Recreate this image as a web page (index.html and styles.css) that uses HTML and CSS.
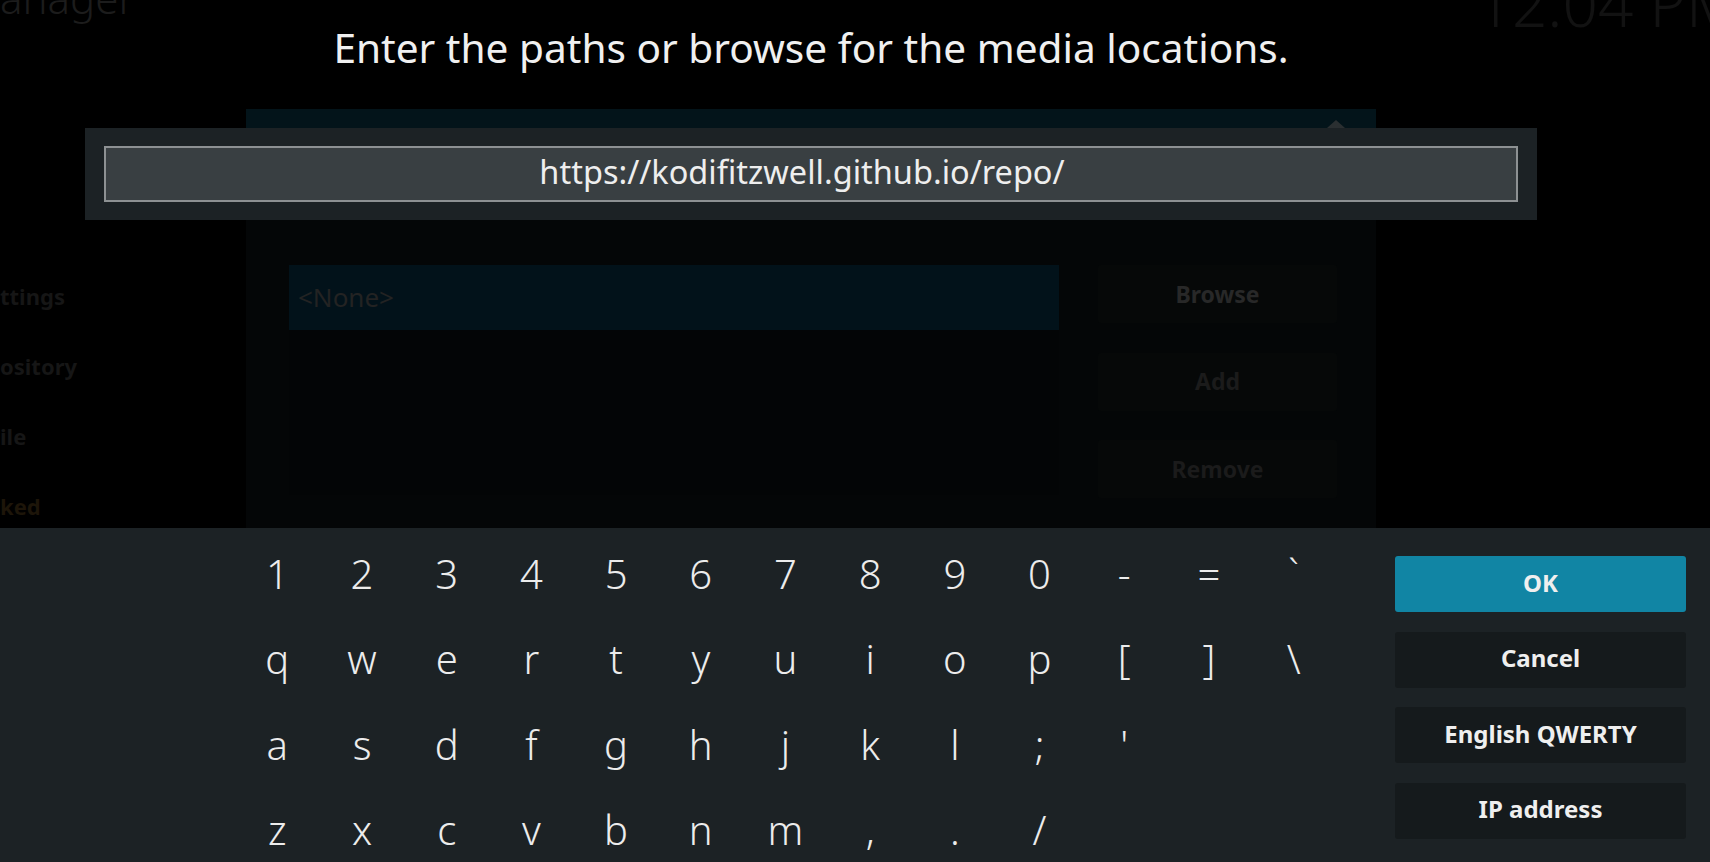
FILE: index.html
```html
<!DOCTYPE html>
<html lang="en">
<head>
<meta charset="utf-8">
<title>Keyboard</title>
<link rel="stylesheet" href="styles.css">
</head>
<body>
<div class="screen">
  <div class="bg">
    <div class="bg-top">
      <div class="bg-heading">anager</div>
      <div class="bg-clock">12:04 PM</div>
    </div>
    <div class="bg-main">
      <nav class="bg-menu">
        <div class="bg-menu-item">ttings</div>
        <div class="bg-menu-item">ository</div>
        <div class="bg-menu-item">ile</div>
        <div class="bg-menu-item accent">ked</div>
      </nav>
      <section class="bg-dialog">
        <div class="bg-dialog-head"><span class="scroll-up"></span></div>
        <div class="bg-dialog-body">
          <div class="bg-list">
            <div class="bg-item">&lt;None&gt;</div>
            <div class="bg-list-rest"></div>
          </div>
          <div class="bg-buttons">
            <div class="bg-btn bright">Browse</div>
            <div class="bg-btn">Add</div>
            <div class="bg-btn">Remove</div>
          </div>
        </div>
      </section>
    </div>
  </div>

  <div class="overlay">
    <div class="kb-top">
      <h1 class="kb-title">Enter the paths or browse for the media locations.</h1>
      <div class="edit-panel">
        <div class="edit-field">https://kodifitzwell.github.io/repo/<span class="cursor"></span></div>
      </div>
    </div>
    <div class="kb-panel">
      <div class="keys">
        <div class="key-row"><span class="key">1</span><span class="key">2</span><span class="key">3</span><span class="key">4</span><span class="key">5</span><span class="key">6</span><span class="key">7</span><span class="key">8</span><span class="key">9</span><span class="key">0</span><span class="key">-</span><span class="key">=</span><span class="key">`</span></div>
        <div class="key-row"><span class="key">q</span><span class="key">w</span><span class="key">e</span><span class="key">r</span><span class="key">t</span><span class="key">y</span><span class="key">u</span><span class="key">i</span><span class="key">o</span><span class="key">p</span><span class="key">[</span><span class="key">]</span><span class="key">\</span></div>
        <div class="key-row"><span class="key">a</span><span class="key">s</span><span class="key">d</span><span class="key">f</span><span class="key">g</span><span class="key">h</span><span class="key">j</span><span class="key">k</span><span class="key">l</span><span class="key">;</span><span class="key">'</span></div>
        <div class="key-row"><span class="key">z</span><span class="key">x</span><span class="key">c</span><span class="key">v</span><span class="key">b</span><span class="key">n</span><span class="key">m</span><span class="key">,</span><span class="key">.</span><span class="key">/</span></div>
      </div>
      <div class="kb-actions">
        <div class="kb-btn focus">OK</div>
        <div class="kb-btn">Cancel</div>
        <div class="kb-btn">English QWERTY</div>
        <div class="kb-btn">IP address</div>
      </div>
    </div>
  </div>
</div>
</body>
</html>
```

FILE: styles.css
```css
* {
  box-sizing: border-box;
  margin: 0;
  padding: 0;
}

html, body {
  width: 1710px;
  height: 862px;
  overflow: hidden;
  background: #000;
}

body {
  font-family: "Noto Sans", "Open Sans", sans-serif;
  color: #fff;
}

.screen {
  position: relative;
  width: 1710px;
  height: 862px;
  overflow: hidden;
}

/* ---------- dimmed window behind ---------- */
.bg {
  display: flex;
  flex-direction: column;
  height: 100%;
}

.bg-top {
  display: flex;
  justify-content: space-between;
  align-items: flex-start;
  height: 109px;
  flex-shrink: 0;
}

.bg-heading {
  font-size: 42px;
  font-weight: 300;
  line-height: 42px;
  color: #1c1c1c;
  margin-top: -23px;
}

.bg-clock {
  font-size: 62px;
  font-weight: 300;
  line-height: 62px;
  color: #121212;
  margin-top: -28px;
  margin-right: -30px;
  white-space: nowrap;
}

.bg-main {
  display: flex;
  flex: 1;
}

.bg-menu {
  width: 246px;
  flex-shrink: 0;
  display: flex;
  flex-direction: column;
  padding-top: 152px;
}

.bg-menu-item {
  height: 70px;
  line-height: 70px;
  font-size: 22px;
  font-weight: 700;
  color: #161616;
}

.bg-menu-item.accent {
  color: #1d1509;
}

.bg-dialog {
  width: 1130px;
  background: #040607;
  display: flex;
  flex-direction: column;
}

.bg-dialog-head {
  height: 80px;
  background: #03141a;
  display: flex;
  justify-content: flex-end;
  align-items: flex-start;
  padding: 11px 31px 0 0;
}

.scroll-up {
  width: 0;
  height: 0;
  border-left: 9px solid transparent;
  border-right: 9px solid transparent;
  border-bottom: 8px solid #2a2f31;
}

.bg-dialog-body {
  display: flex;
  gap: 39px;
  padding: 76px 0 0 43px;
}

.bg-list {
  width: 770px;
  display: flex;
  flex-direction: column;
}

.bg-item {
  height: 65px;
  line-height: 64px;
  background: #02121a;
  font-size: 26px;
  color: #232323;
  padding-left: 9px;
}

.bg-list-rest {
  height: 165px;
  background: #030506;
}

.bg-buttons {
  width: 239px;
  display: flex;
  flex-direction: column;
  gap: 29.5px;
}

.bg-btn {
  height: 58px;
  border-radius: 3px;
  background: #060808;
  font-size: 23px;
  font-weight: 700;
  color: #1b1b1b;
  display: flex;
  align-items: center;
  justify-content: center;
  padding-bottom: 1px;
}

.bg-btn.bright {
  color: #282828;
}

/* ---------- keyboard dialog ---------- */
.overlay {
  position: absolute;
  inset: 0;
  display: flex;
  flex-direction: column;
}

.kb-top {
  margin-left: 85px;
  width: 1452px;
}

.kb-title {
  height: 128px;
  padding-top: 28px;
  font-size: 40.6px;
  font-weight: 400;
  line-height: 40px;
  text-align: center;
  color: #f0f0f0;
  white-space: nowrap;
}

.edit-panel {
  height: 92px;
  background: #1c2225;
  padding: 18px 19px;
}

.edit-field {
  height: 56px;
  border: 2px solid #8d9193;
  background: #393f42;
  font-size: 32.5px;
  line-height: 48px;
  text-align: center;
  color: #eeeeee;
}

.cursor {
  display: inline-block;
  width: 18px;
}

.kb-panel {
  margin-top: auto;
  height: 334px;
  background: #1c2225;
  display: flex;
}

.keys {
  padding: 3px 0 0 235px;
  display: flex;
  flex-direction: column;
}

.key-row {
  display: grid;
  grid-template-columns: repeat(13, 84.7px);
  height: 85.4px;
}

.key {
  font-size: 40px;
  font-weight: 300;
  line-height: 85.4px;
  text-align: center;
  color: #ececec;
}

.kb-actions {
  margin-left: auto;
  margin-right: 24px;
  padding-top: 28px;
  display: flex;
  flex-direction: column;
  gap: 19.5px;
}

.kb-btn {
  width: 291px;
  height: 56px;
  border-radius: 3px;
  background: #151a1c;
  font-size: 24px;
  font-weight: 700;
  color: #efefef;
  display: flex;
  align-items: center;
  justify-content: center;
  padding-bottom: 4px;
}

.kb-btn.focus {
  background: #1185a4;
}
```
